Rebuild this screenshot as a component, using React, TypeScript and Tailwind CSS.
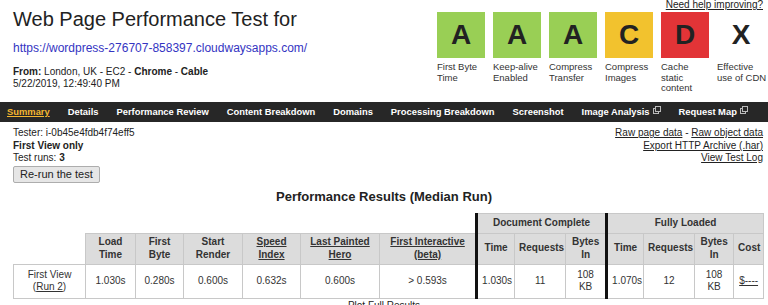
import type { ReactNode } from "react";

// Grades shown in the top right corner
const grades = [
  { letter: "A", label: "First Byte Time", color: "bg-[#99cf55]" },
  { letter: "A", label: "Keep-alive Enabled", color: "bg-[#99cf55]" },
  { letter: "A", label: "Compress Transfer", color: "bg-[#99cf55]" },
  { letter: "C", label: "Compress Images", color: "bg-[#f2c22e]" },
  { letter: "D", label: "Cache static content", color: "bg-[#e23437]" },
  { letter: "X", label: "Effective use of CDN", color: "" },
];

const tabs = [
  "Summary",
  "Details",
  "Performance Review",
  "Content Breakdown",
  "Domains",
  "Processing Breakdown",
  "Screenshot",
];

function ExternalIcon() {
  return (
    <svg width="8" height="8" viewBox="0 0 8 8" className="ml-[3px] inline-block align-[1px]">
      <rect x="0.5" y="2.5" width="5" height="5" fill="none" stroke="#bbb" strokeWidth="1" />
      <rect x="2.5" y="0.5" width="5" height="5" fill="#272727" stroke="#bbb" strokeWidth="1" />
    </svg>
  );
}

function Th({ children, className = "", colSpan }: { children?: ReactNode; className?: string; colSpan?: number }) {
  return (
    <th
      colSpan={colSpan}
      className={`border border-[#c8c8c8] bg-[#dcdcdc] px-1 font-bold leading-[12.5px] ${className}`}
    >
      {children}
    </th>
  );
}

function Td({ children, className = "" }: { children?: ReactNode; className?: string }) {
  return (
    <td className={`border border-[#c8c8c8] px-1 leading-[12.5px] ${className}`}>{children}</td>
  );
}

export default function App() {
  return (
    <div className="h-[305px] w-[768px] overflow-hidden bg-white font-['Liberation_Sans',Arial,sans-serif] text-[#222]">
      {/* Header */}
      <div className="flex h-[102px]">
        <div className="flex-1 pl-[13px]">
          <h1 className="pt-[5px] text-[20px] leading-[28px] text-[#222]">Web Page Performance Test for</h1>
          <div className="mt-[8px] text-[12px] leading-[14px] text-[#3434c2]">
            https://wordpress-276707-858397.cloudwaysapps.com/
          </div>
          <div className="mt-[10px] text-[10px] leading-[13px]">
            <b>From:</b> London, UK - EC2 - <b>Chrome</b> - <b>Cable</b>
          </div>
          <div className="text-[10px] leading-[12px]">5/22/2019, 12:49:40 PM</div>
        </div>
        <div className="flex w-[331px] flex-col pr-[5px]">
          <div className="self-end text-[10px] leading-[10px] underline">Need help improving?</div>
          <div className="mt-[2px] flex gap-[8px]">
            {grades.map((g, i) => (
              <div key={i} className="w-[48px]">
                <div
                  className={`flex h-[46px] w-[48px] items-center justify-center text-[28px] font-bold text-[#222] ${g.color}`}
                >
                  {g.letter}
                </div>
                <div className="mt-[4px] w-[50px] text-[9.5px] leading-[10.5px] text-[#333]">{g.label}</div>
              </div>
            ))}
          </div>
        </div>
      </div>

      {/* Nav */}
      <div className="flex h-[20px] items-center gap-[18px] bg-[#272727] pl-[7px] text-[9.4px] font-bold text-white">
        {tabs.map((t) => (
          <span key={t} className={t === "Summary" ? "text-[#f5b731] underline" : ""}>
            {t}
          </span>
        ))}
        <span>
          Image Analysis
          <ExternalIcon />
        </span>
        <span>
          Request Map
          <ExternalIcon />
        </span>
      </div>

      {/* Test info */}
      <div className="flex justify-between px-[5px] pl-[13px] pt-[5px] text-[10px]">
        <div className="leading-[12.5px]">
          <div>Tester: i-0b45e4fdb4f74eff5</div>
          <div className="font-bold">First View only</div>
          <div>
            Test runs: <b>3</b>
          </div>
          <button className="mt-[1px] h-[17px] rounded-[2px] border border-[#adadad] bg-[#e6e6e6] px-[6px] text-[11px] leading-[15px] text-[#222]">
            Re-run the test
          </button>
        </div>
        <div className="text-right leading-[12.5px]">
          <div>
            <span className="underline">Raw page data</span> - <span className="underline">Raw object data</span>
          </div>
          <div className="underline">Export HTTP Archive (.har)</div>
          <div className="underline">View Test Log</div>
        </div>
      </div>

      {/* Results */}
      <h2 className="mt-[6px] text-center text-[13px] font-bold leading-[16px]">Performance Results (Median Run)</h2>

      <table className="ml-[13px] mt-[8px] w-[750px] table-fixed border-collapse text-center text-[10px] text-[#333]">
        <colgroup>
          <col className="w-[72px]" />
          <col className="w-[50px]" />
          <col className="w-[48px]" />
          <col className="w-[59px]" />
          <col className="w-[58px]" />
          <col className="w-[79px]" />
          <col className="w-[97px]" />
          <col className="w-[38px]" />
          <col className="w-[51px]" />
          <col className="w-[41px]" />
          <col className="w-[37px]" />
          <col className="w-[51px]" />
          <col className="w-[39px]" />
          <col className="w-[30px]" />
        </colgroup>
        <thead>
          <tr className="h-[20px]">
            <th colSpan={7}></th>
            <Th colSpan={3} className="border-l-[3px] border-l-[#111]">
              Document Complete
            </Th>
            <Th colSpan={4} className="border-l-[3px] border-l-[#111]">
              Fully Loaded
            </Th>
          </tr>
          <tr className="h-[31px]">
            <th className="border-0"></th>
            <Th>
              Load
              <br />
              Time
            </Th>
            <Th>
              First
              <br />
              Byte
            </Th>
            <Th>
              Start
              <br />
              Render
            </Th>
            <Th>
              <span className="underline">
                Speed
                <br />
                Index
              </span>
            </Th>
            <Th>
              <span className="underline">
                Last Painted
                <br />
                Hero
              </span>
            </Th>
            <Th>
              <span className="underline">
                First Interactive
                <br />
                (beta)
              </span>
            </Th>
            <Th className="border-l-[3px] border-l-[#111]">Time</Th>
            <Th>Requests</Th>
            <Th>
              Bytes
              <br />
              In
            </Th>
            <Th className="border-l-[3px] border-l-[#111]">Time</Th>
            <Th>Requests</Th>
            <Th>
              Bytes
              <br />
              In
            </Th>
            <Th>Cost</Th>
          </tr>
        </thead>
        <tbody>
          <tr className="h-[34px]">
            <Td>
              First View
              <br />(<span className="underline">Run 2</span>)
            </Td>
            <Td>1.030s</Td>
            <Td>0.280s</Td>
            <Td>0.600s</Td>
            <Td>0.632s</Td>
            <Td>0.600s</Td>
            <Td>&gt; 0.593s</Td>
            <Td className="border-l-[3px] border-l-[#111]">1.030s</Td>
            <Td>11</Td>
            <Td>
              108
              <br />
              KB
            </Td>
            <Td className="border-l-[3px] border-l-[#111]">1.070s</Td>
            <Td>12</Td>
            <Td>
              108
              <br />
              KB
            </Td>
            <Td>
              <span className="underline">$----</span>
            </Td>
          </tr>
        </tbody>
      </table>
      <div className="mt-[1px] text-center text-[10px] leading-[12px]">Plot Full Results</div>
    </div>
  );
}
